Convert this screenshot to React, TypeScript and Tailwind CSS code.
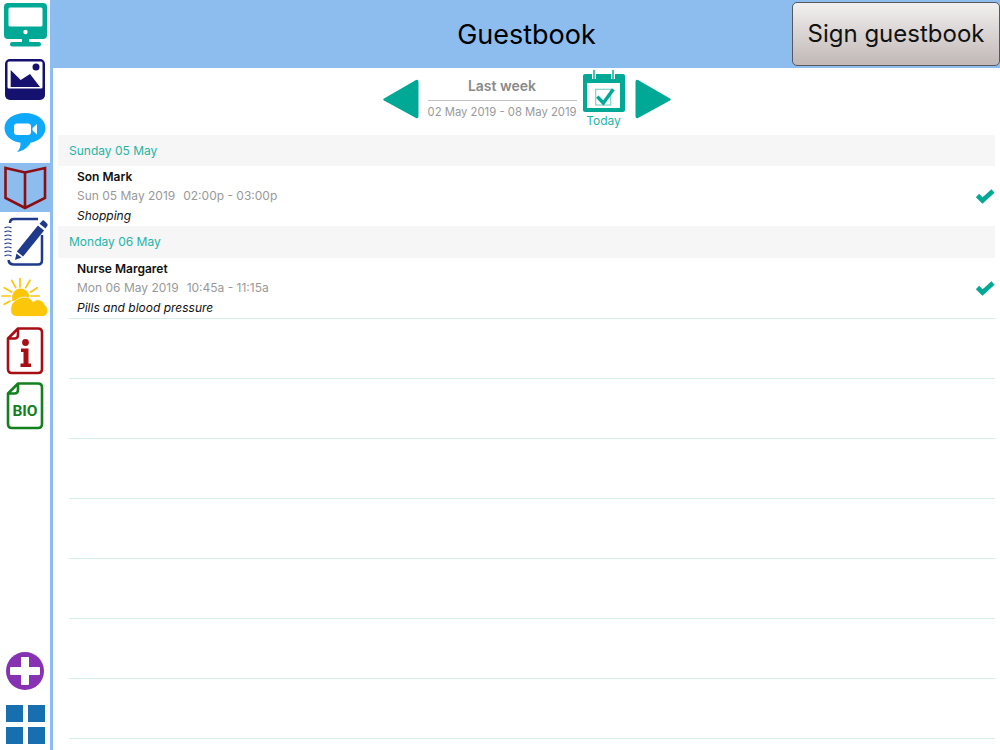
const font = { fontFamily: 'Inter, "Liberation Sans", sans-serif' };

function MonitorIcon() {
  return (
    <svg width="50" height="48" viewBox="0 0 50 48">
      <rect x="4" y="3" width="43" height="36" rx="4" fill="#00a896" />
      <rect x="8.5" y="7.5" width="34" height="19" rx="1.5" fill="#fff" />
      <circle cx="25.5" cy="32" r="2.2" fill="#fff" />
      <rect x="22" y="38" width="7" height="5" fill="#00a896" />
      <rect x="10" y="42" width="31" height="4.5" rx="2.2" fill="#00a896" />
    </svg>
  );
}

function PhotoIcon() {
  return (
    <svg width="50" height="44" viewBox="0 0 50 44">
      <rect x="5" y="1" width="40" height="41" rx="5" fill="#14116f" />
      <rect x="7.5" y="3.5" width="35" height="27" rx="1.5" fill="#fff" />
      <path d="M10.7 12 L20.7 22 L30 16 L40 29 H10.7 Z" fill="#14116f" />
      <circle cx="36" cy="9" r="3.5" fill="#14116f" />
    </svg>
  );
}

function VideoIcon() {
  return (
    <svg width="50" height="44" viewBox="0 0 50 44">
      <path
        d="M25 0 C13.5 0 4.5 6.5 4.5 15 C4.5 22.5 11 28.5 20.5 29.7 C20.8 33.5 19.5 36.5 17 39 C23 38 28 34.5 30.5 29.7 C39 28.3 45.5 22.5 45.5 15 C45.5 6.5 36.5 0 25 0 Z"
        fill="#0fa9fb"
      />
      <rect x="14" y="10.5" width="17" height="11.5" rx="3" fill="#fff" />
      <path d="M32.5 15 L37 11 V21.5 L32.5 17.5 Z" fill="#fff" />
    </svg>
  );
}

function BookIcon() {
  return (
    <svg width="50" height="49" viewBox="0 0 50 49" fill="none">
      <path
        d="M5.5 5 L25 9.5 L45 5 V35 L25 45 L5.5 35 Z M25 9.5 V45"
        stroke="#8b0e12"
        strokeWidth="2.6"
        strokeLinejoin="miter"
      />
    </svg>
  );
}

function NotebookIcon() {
  return (
    <svg width="50" height="50" viewBox="0 0 50 50" fill="none">
      <path
        d="M10 6 Q10 2 14 2 H38 M42 18 V43 Q42 47.5 38 47.5 H14 Q9 47.5 8.5 43"
        stroke="#1f3a8a"
        strokeWidth="2.5"
      />
      {[11, 15, 19, 23, 27, 31, 35, 39].map((y) => (
        <path key={y} d={`M4.5 ${y} Q8 ${y - 2} 11.5 ${y}`} stroke="#1f3a8a" strokeWidth="1.2" />
      ))}
      <path d="M16.9 34.5 L23.1 39.5 L44.1 13.5 L37.9 8.5 Z" fill="#1f3a8a" />
      <path d="M39.5 6.8 L45.5 11.5 L47.5 8.5 Q48 7.5 47 6.5 L44.5 4 Q43.5 3 42.5 3.5 Z" fill="#1f3a8a" />
      <path d="M15 43 L16.5 36.5 L21.5 40.5 Z" fill="#1f3a8a" />
    </svg>
  );
}

function WeatherIcon() {
  return (
    <svg width="50" height="43" viewBox="0 0 50 43" fill="none">
      <g stroke="#fcc60a" strokeWidth="1.7" strokeLinecap="round">
        <path d="M20 1.7 V10 M11.7 3.3 L15.7 10.7 M4.3 10.7 L11.7 15 M1.7 19 H10 M4.3 27.3 L10 24 M30 3.3 L25.7 10.7 M37.3 10.7 L30.7 15 M39.3 19 H31" />
      </g>
      <path d="M12.2 21 A8.5 8.5 0 0 1 29.2 19 V24 H12.2 Z" fill="#fcc60a" />
      <path
        d="M16.7 39.5 Q10.7 39 10.7 33 Q10.7 26 15 23.7 Q22 18 30 21.3 Q32 23.5 33 24.7 Q37 21.5 40 23 Q44 24.5 45 28 Q47.7 30 47.7 33 Q47.5 39 43 39.5 Z"
        fill="#fcc60a"
        stroke="#fff"
        strokeWidth="0.8"
      />
    </svg>
  );
}

function InfoIcon() {
  return (
    <svg width="50" height="48" viewBox="0 0 50 48" fill="none">
      <path
        d="M18 1.5 H38 Q42 1.5 42 5.5 V42 Q42 46 38 46 H12 Q8 46 8 42 V11.5 Z M18 1.5 V8 Q18 11.5 14.5 11.5 H8"
        stroke="#a80f14"
        strokeWidth="2.6"
        strokeLinejoin="round"
      />
      <circle cx="25.5" cy="15.5" r="3.4" fill="#a80f14" />
      <path d="M21 21.5 H28.5 V36.5 H31 V40 H20.5 V36.5 H23.5 V25 H21 Z" fill="#a80f14" />
    </svg>
  );
}

function BioIcon() {
  return (
    <div className="relative h-[48px] w-[50px]">
      <svg width="50" height="48" viewBox="0 0 50 48" fill="none">
        <path
          d="M18 1.5 H38 Q42 1.5 42 5.5 V42 Q42 46 38 46 H12 Q8 46 8 42 V11.5 Z M18 1.5 V8 Q18 11.5 14.5 11.5 H8"
          stroke="#12801c"
          strokeWidth="2.6"
          strokeLinejoin="round"
        />
      </svg>
      <span
        className="absolute inset-x-0 top-[20px] text-center text-[15.5px] leading-[18px] font-bold text-[#12801c]"
        style={{ fontFamily: 'Roboto, sans-serif' }}
      >
        BIO
      </span>
    </div>
  );
}

function PlusIcon() {
  return (
    <svg width="50" height="40" viewBox="0 0 50 40">
      <circle cx="25" cy="20" r="19" fill="#8632b2" />
      <path d="M21 6 H29 V16 H39 Q40 16 40 17 V23 Q40 24 39 24 H29 V33 Q29 34 28 34 H22 Q21 34 21 33 V24 H11 Q10 24 10 23 V17 Q10 16 11 16 H21 Z" fill="#fff" />
    </svg>
  );
}

function GridIcon() {
  return (
    <div className="grid w-[39px] grid-cols-2 gap-[5px]">
      {[0, 1, 2, 3].map((i) => (
        <div key={i} className="h-[17px] w-[17px] bg-[#186fb0]" />
      ))}
    </div>
  );
}

function TriangleLeft() {
  return (
    <svg width="36" height="40" viewBox="0 0 36 40">
      <path d="M1 19.5 L33 1 Q35.5 0 35.5 3 V37 Q35.5 40 33 39 L1 21.5 Q-0.5 20.5 1 19.5 Z" fill="#00a896" />
    </svg>
  );
}

function TriangleRight() {
  return (
    <svg width="36" height="40" viewBox="0 0 36 40">
      <path d="M35 19.5 L3 1 Q0.5 0 0.5 3 V37 Q0.5 40 3 39 L35 21.5 Q36.5 20.5 35 19.5 Z" fill="#00a896" />
    </svg>
  );
}

function CalendarIcon() {
  return (
    <svg width="42" height="43" viewBox="0 0 42 43" fill="none">
      <rect x="0" y="4" width="42" height="38" rx="2" fill="#00a896" />
      <rect x="4" y="13" width="33" height="25" fill="#fff" />
      <path d="M11 0.5 V9 M30 0.5 V9" stroke="#fff" strokeWidth="4" />
      <path d="M11 0 V8.5 M30 0 V8.5" stroke="#00a896" strokeWidth="1.4" strokeLinecap="round" />
      <rect x="12.7" y="19.3" width="15" height="15.7" stroke="#7fd3ca" strokeWidth="1.2" />
      <path d="M14.3 26.7 L20.3 33 L30.3 19.3" stroke="#00a896" strokeWidth="3.4" />
    </svg>
  );
}

function CheckMark() {
  return (
    <svg width="20" height="16" viewBox="0 0 20 16">
      <path d="M2.5 7.5 L7.5 12.5 L18 3" fill="none" stroke="#00a896" strokeWidth="4.6" />
    </svg>
  );
}

const days = [
  { day: 'Sunday 05 May', name: 'Son Mark', date: 'Sun 05 May 2019', time: '02:00p - 03:00p', note: 'Shopping', head: 'h-[31px]' },
  { day: 'Monday 06 May', name: 'Nurse Margaret', date: 'Mon 06 May 2019', time: '10:45a - 11:15a', note: 'Pills and blood pressure', head: 'h-[32px]' },
];

export default function App() {
  return (
    <div className="flex h-[750px] w-[1000px] overflow-hidden bg-white" style={font}>
      <aside className="flex h-full w-[53px] shrink-0 flex-col border-r-[3px] border-[#8dbcee] bg-white">
        <div className="h-[50px]"><MonitorIcon /></div>
        <div className="mt-[8px] h-[44px]"><PhotoIcon /></div>
        <div className="mt-[11px] h-[45px]"><VideoIcon /></div>
        <div className="mt-[5px] h-[49px] bg-[#8dbcee]"><BookIcon /></div>
        <div className="mt-[5px] h-[50px]"><NotebookIcon /></div>
        <div className="mt-[10px] h-[43px]"><WeatherIcon /></div>
        <div className="mt-[7px] h-[48px]"><InfoIcon /></div>
        <div className="mt-[7px] h-[48px]"><BioIcon /></div>
        <div className="mt-auto h-[40px]"><PlusIcon /></div>
        <div className="mt-[14px] mb-[6px] pl-[6px]"><GridIcon /></div>
      </aside>

      <main className="flex min-w-0 flex-1 flex-col">
        <header className="relative flex h-[68px] shrink-0 items-center justify-center bg-[#8dbcee]">
          <h1 className="text-[27px] leading-none font-normal text-black">Guestbook</h1>
          <button className="absolute top-[2px] right-0 h-[64px] w-[208px] rounded-[5px] border border-[#55595e] bg-gradient-to-b from-[#f2f0f0] to-[#c1b8b7] text-[24px] leading-none whitespace-nowrap text-[#111]">
            Sign guestbook
          </button>
        </header>

        <div className="flex h-[67px] shrink-0 items-start justify-center">
          <div className="mt-[11px]"><TriangleLeft /></div>
          <div className="mt-[8px] ml-[9px] w-[149px] text-center">
            <div className="border-b border-[#c4c4c4] pb-[5px] text-[14px] leading-[19px] font-semibold text-[#8a8a8a]">Last week</div>
            <div className="mt-[2px] text-[11.3px] leading-[18px] whitespace-nowrap text-[#999]">02 May 2019 - 08 May 2019</div>
          </div>
          <div className="ml-[6px] flex w-[42px] flex-col items-center pt-[2px]">
            <CalendarIcon />
            <span className="text-[12px] leading-[15px] text-[#1fb5a6]">Today</span>
          </div>
          <div className="mt-[11px] ml-[10px]"><TriangleRight /></div>
        </div>

        <div className="px-[5px]">
          {days.map((d) => (
            <section key={d.day}>
              <div className={`flex items-center bg-[#f6f6f6] pl-[11px] text-[12px] text-[#1fb5a6] ${d.head}`}>{d.day}</div>
              <div className="flex h-[60px] items-center justify-between pl-[19px]">
                <div className="text-[12px] leading-[19.5px]">
                  <div className="font-semibold text-[#111]">{d.name}</div>
                  <div className="text-[#999]">
                    {d.date}
                    <span className="ml-[8px]">{d.time}</span>
                  </div>
                  <div className="text-[#111] italic">{d.note}</div>
                </div>
                <CheckMark />
              </div>
            </section>
          ))}
        </div>

        <div className="mr-[5px] ml-[16px]">
          {[0, 1, 2, 3, 4, 5, 6, 7].map((i) => (
            <div key={i} className={`border-b border-[#d6efeb] ${i === 0 ? 'h-[1px]' : 'h-[60px]'}`} />
          ))}
        </div>
      </main>
    </div>
  );
}
